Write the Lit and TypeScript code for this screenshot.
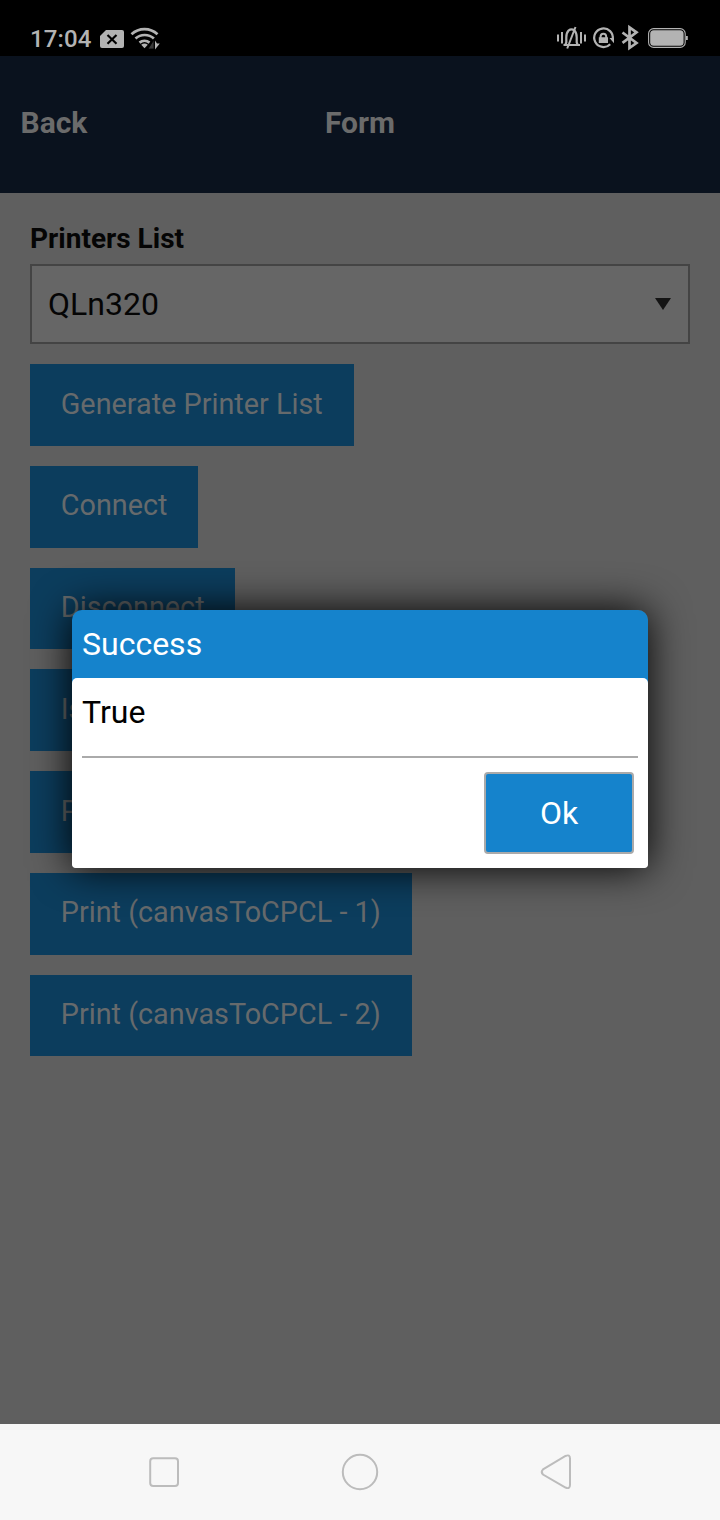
import { LitElement, html, css } from "lit";
import { customElement } from "lit/decorators.js";

@customElement("status-bar")
class StatusBar extends LitElement {
  static styles = css`
    :host {
      display: flex;
      height: 56px;
      background: #000;
      color: #b3b3b3;
      box-sizing: border-box;
      padding: 20px 30px 0;
      justify-content: space-between;
    }
    .group { display: flex; height: 36px; }
    .time { font: 500 24px/36px Roboto, sans-serif; width: 68px; letter-spacing: 0.1px; padding-top: 1px; }
    svg { display: block; flex: none; }
  `;
  render() {
    return html`
      <div class="group">
        <div class="time">17:04</div>
        <svg width="66" height="36" viewBox="98 20 66 36" fill="none">
          <path fill="#b3b3b3" d="M106 30h16a2 2 0 0 1 2 2v14a2 2 0 0 1-2 2h-20a2 2 0 0 1-2-2v-10z" />
          <path stroke="#000" stroke-width="2.2" d="M107.5 35l9 8.700M116.5 35l-9 8.700" />
          <g stroke="#b3b3b3" stroke-width="2.7">
            <path d="M131.5 34.3a19 19 0 0 1 26 0" />
            <path d="M135.5 38.6a13.5 13.5 0 0 1 18.4 0" />
            <path d="M139.5 42.6a8 8 0 0 1 10 0" />
          </g>
          <path fill="#b3b3b3" d="M141.2 44.7q3.3-2.6 6.6 0l-3.3 3.5z" />
          <path fill="#383838" stroke="#000" stroke-width="0.8" d="M154 39.5v9.500h-6z" />
          <path fill="#b3b3b3" d="M155 40.5v9l4.800-6h-2.800z" />
        </svg>
      </div>
      <svg width="134" height="36" viewBox="556 20 134 36" fill="none">
        <g stroke="#b3b3b3" stroke-width="2">
          <path d="M558 34.5v7M562 32v11.5M581 32v11.5M585 34.5v7" />
          <path d="M563.5 45h16.500M565.500 44.500l0.800-2v-5c0-3 0.500-5.200 2.200-6.900q3-2.400 6 0c1.700 1.700 2.200 3.900 2.200 6.900v5l0.800 2" stroke-width="2.2" />
          <path d="M567.2 48.5l8.300-21.500" stroke-width="2" />
          <path d="M610.2 44.2a9.3 9.3 0 1 1 2.5-5" stroke-width="2.2" />
          <path d="M600.6 38v-1.500a2.800 2.800 0 0 1 5.600 0v1.500" />
          <path d="M622.5 32.5l14.000 10.500-7 5v-20.600l7 5-14 10.500" stroke-width="2.700" stroke-linejoin="miter" />
        </g>
        <path fill="#b3b3b3" d="M609.5 38h4.500v5.200zM598.800 37.300h9.200v5.700h-9.200z" />
        <rect x="648.6" y="28.6" width="36.6" height="18.800" rx="5" stroke="#b3b3b3" stroke-width="1.1" />
        <rect x="650.2" y="30.2" width="33.4" height="15.600" rx="3.500" fill="#b3b3b3" />
        <path fill="#b3b3b3" d="M686 36h1.800v4H686z" />
      </svg>
    `;
  }
}

@customElement("message-dialog")
class MessageDialog extends LitElement {
  static styles = css`
    :host {
      display: block;
      border-radius: 10px 10px 4px 4px;
      background: linear-gradient(#1583cc 80px, #fff 80px);
      box-shadow: 0 0 40px #000;
      font: 32px/40px Roboto, sans-serif;
    }
    .title { height: 68px; box-sizing: border-box; padding: 14px 10px; color: #fff; }
    .body { height: 190px; box-sizing: border-box; background: #fff; border-radius: 5px; padding: 0 10px; color: #000; }
    .text { height: 80px; box-sizing: border-box; padding-top: 14px; border-bottom: 2px solid #aaa; }
    .actions { display: flex; justify-content: flex-end; padding: 14px 4px 0 0; }
    .ok {
      width: 150px; height: 82px; box-sizing: border-box; border: 2px solid #aaa; border-radius: 4px;
      background: #1583cc; color: #fff; font: inherit; padding: 0;
    }
  `;
  render() {
    return html`
      <div class="title">Success</div>
      <div class="body">
        <div class="text">True</div>
        <div class="actions"><button class="ok">Ok</button></div>
      </div>
    `;
  }
}

@customElement("app-root")
class AppRoot extends LitElement {
  static styles = css`
    :host {
      display: flex;
      flex-direction: column;
      position: relative;
      height: 1520px;
      background: #5f5f5f;
      font-family: Roboto, sans-serif;
      overflow: hidden;
    }
    .header {
      height: 137px;
      background: #0a121e;
      color: #6b6b6b;
      display: grid;
      grid-template-columns: 1fr auto 1fr;
      align-items: center;
      padding: 0 20.5px 5px;
      box-sizing: border-box;
      font-size: 30px;
      font-weight: 700;
    }
    .content { flex: 1; padding: 26px 30px 0; display: flex; flex-direction: column; align-items: flex-start; }
    .label { font-size: 28px; line-height: 40px; height: 45px; font-weight: 700; color: #050505; }
    .select {
      align-self: stretch; height: 80px; box-sizing: border-box; border: 2px solid #444; background: #666;
      display: flex; align-items: center; justify-content: space-between; padding: 0 17px 0 16px;
      font-size: 32px; color: #050505; margin-bottom: 20px;
    }
    .arrow { display: block; }
    .buttons { display: flex; flex-direction: column; align-items: flex-start; gap: 20px; }
    .btn {
      height: 81.75px; border: 0; background: #0c3d5d; color: #666a6c; font: 28.8px Roboto, sans-serif;
      padding: 0 30.9px 2.3px 30.75px; white-space: nowrap;
    }
    .nav { height: 96px; background: #f7f7f7; display: flex; }
    message-dialog { position: absolute; left: 72px; top: 610px; width: 576px; }
  `;
  private actions = [
    "Generate Printer List",
    "Connect",
    "Disconnect",
    "Is Connected",
    "Print",
    "Print (canvasToCPCL - 1)",
    "Print (canvasToCPCL - 2)",
  ];
  render() {
    return html`
      <status-bar></status-bar>
      <div class="header"><span>Back</span><span>Form</span><span></span></div>
      <div class="content">
        <div class="label">Printers List</div>
        <div class="select">
          <span>QLn320</span>
          <svg class="arrow" width="16" height="12"><path d="M0 0h16l-8 12z" fill="#141414" /></svg>
        </div>
        <div class="buttons">${this.actions.map((a) => html`<button class="btn">${a}</button>`)}</div>
      </div>
      <div class="nav">
        <svg width="720" height="96" viewBox="0 1424 720 96" fill="none" stroke="#bcbcbc" stroke-width="2">
          <rect x="150.2" y="1458.2" width="27.8" height="27.8" rx="3" />
          <circle cx="360" cy="1472" r="17.2" />
          <path d="M543 1469.4L565.5 1456Q570 1454 570 1458.500V1485Q570 1489.500 565.500 1487.500L543 1474.500Q540.500 1472 543 1469.400Z" />
        </svg>
      </div>
      <message-dialog></message-dialog>
    `;
  }
}
